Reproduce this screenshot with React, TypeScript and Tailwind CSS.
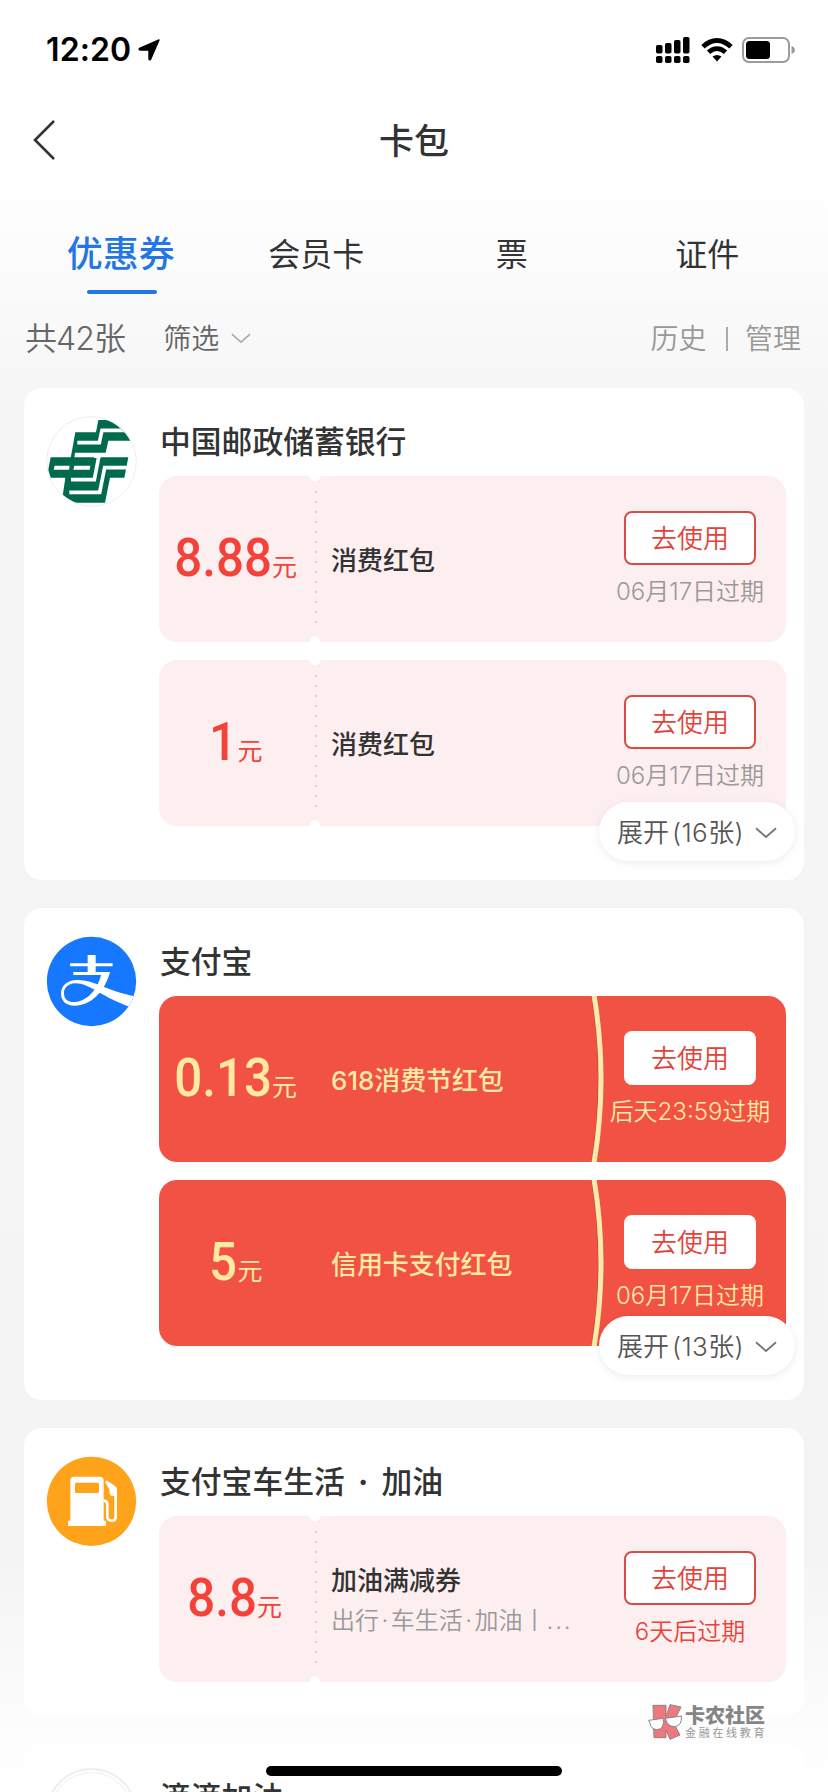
import { Fragment, useState } from "react";
import type { ReactNode } from "react";

type Coupon = {
    amount: string;
    name: string;
    desc?: string;
    expire: string;
    urgent?: boolean;
};

type Shop = {
    id: string;
    title: string;
    logo: ReactNode;
    theme: "pink" | "red";
    coupons: Coupon[];
    more?: number;
};

function PostBankLogo(){
    return (
        <svg viewBox="78 108 273 273" className="h-[91px] w-[91px]">
            <defs>
                <clipPath id="bank">
                    <circle cx="214.5" cy="244.5" r="132" />
                </clipPath>
            </defs>
            <circle cx="214.5" cy="244.5" r="134.5" fill="#fff" stroke="#e9e9e9" strokeWidth="2.5" />
            <g clipPath="url(#bank)">
                <path fill="#016a4c" d="M166 157H228L235 120H350V182H265L257 218H165L163 234H152Z" />
                <path fill="#016a4c" d="M92 232H325L313 293H270L255 368H125L136 293H80Z" />
                <path fill="none" stroke="#fff" strokeWidth="11" d="M172 188H238L246 151H345" />
                <path fill="none" stroke="#fff" strokeWidth="11" d="M153 299H223L237 226" />
                <path fill="none" stroke="#fff" strokeWidth="11" d="M148 337H239L254 263H335" />
                <path fill="#fff" d="M104 257H149L147 269H101ZM163 257H211L209 269H160Z" />
                <path fill="#fff" d="M223 226H244L242 234H222Z" />
            </g>
        </svg>
    );
}

function AlipayLogo(){
    return (
        <svg viewBox="78 108 273 273" className="h-[91px] w-[91px]">
            <defs>
                <clipPath id="alipay">
                    <circle cx="214.5" cy="244.5" r="134" />
                </clipPath>
            </defs>
            <circle cx="214.5" cy="244.5" r="134" fill="#1677ff" />
            <g clipPath="url(#alipay)" fill="#fff">
                <path d="M203 165H227V219H203Z" />
                <path d="M150 190H278V199H150Z" />
                <path d="M160 216H270C264 240 252 262 241 276C218 304 192 317 163 317C138 317 123 302 123 281C123 256 143 241 170 240C194 239 216 246 240 256C268 268 300 281 350 290V328C300 312 262 292 231 274C207 260 188 250 166 250C143 251 131 264 132 281C133 299 146 307 164 306C186 305 206 292 223 270C232 258 238 244 243 225H160Z" />
            </g>
        </svg>
    );
}

function GasLogo(){
    return (
        <svg viewBox="78 138 273 273" className="h-[91px] w-[91px]">
            <circle cx="214.5" cy="274" r="134" fill="#ffa31a" />
            <path fill="#fff" d="M151 212Q151 200 163 200H239Q251 200 251 212V332H258V348H144V332H151Z" />
            <rect x="165" y="218" width="72" height="31" rx="4" fill="#ffa31a" />
            <path fill="none" stroke="#fff" strokeWidth="8" strokeLinejoin="round" d="M250 271Q262 273 262 284V321Q263 332 275 332Q287 332 287 320V240Q287 234 281 230L257 214" />
            <path fill="#fff" d="M258 213L289 233V258H276Q268 255 269 246Q271 238 264 232Q257 224 258 213Z" />
        </svg>
    );
}

const shops: Shop[] = [
    {
        id: "bank",
        title: "中国邮政储蓄银行",
        logo: <PostBankLogo />,
        theme: "pink",
        more: 16,
        coupons: [
            { amount: "8.88", name: "消费红包", expire: "06月17日过期" },
            { amount: "1", name: "消费红包", expire: "06月17日过期" },
        ],
    },
    {
        id: "alipay",
        title: "支付宝",
        logo: <AlipayLogo />,
        theme: "red",
        more: 13,
        coupons: [
            { amount: "0.13", name: "618消费节红包", expire: "后天23:59过期" },
            { amount: "5", name: "信用卡支付红包", expire: "06月17日过期" },
        ],
    },
    {
        id: "gas",
        title: "支付宝车生活 · 加油",
        logo: <GasLogo />,
        theme: "pink",
        coupons: [
            { amount: "8.8", name: "加油满减券", desc: "出行·车生活·加油丨", expire: "6天后过期", urgent: true },
        ],
    },
];

const tabs = ["优惠券", "会员卡", "票", "证件"];

function StatusBar(){
    return (
        <div className="flex h-[100px] items-center justify-between pl-[46px] pr-[33px]">
            <div className="flex items-center gap-[7px]">
                <span className="font-['Inter'] text-[32px] font-semibold leading-none tracking-[0.1px] text-black">12:20</span>
                <svg viewBox="0 0 22 22" className="h-[22px] w-[22px]">
                    <path d="M21 1L12.5 20.5Q11.5 21.5 11 20V11H2Q.5 10.5 1.500 9.500Z" fill="#000" stroke="#000" strokeWidth="1.400" strokeLinejoin="round" />
                </svg>
            </div>
            <div className="flex items-center">
                <svg viewBox="0 0 34 26" className="h-[26px] w-[34px]">
                    <g fill="#000">
                        <rect x="0" y="8" width="6.500" height="8.500" rx="1.800" />
                        <rect x="9" y="6" width="6.500" height="10.500" rx="1.800" />
                        <rect x="18" y="3" width="6.500" height="13.500" rx="1.800" />
                        <rect x="27" y="0" width="6.500" height="16.500" rx="1.800" />
                        <rect x="0" y="19" width="6.500" height="7" rx="1.800" />
                        <rect x="9" y="19" width="6.500" height="7" rx="1.800" />
                        <rect x="18" y="19" width="6.500" height="7" rx="1.800" />
                        <rect x="27" y="19" width="6.500" height="7" rx="1.800" />
                    </g>
                </svg>
                <svg viewBox="0 0 32 24" className="ml-[11px] h-6 w-8">
                    <g fill="none" stroke="#000" strokeWidth="4.800">
                        <path d="M2 8.800Q8.500 2.500 16 2.500T30 8.800" />
                        <path d="M7.500 14.300Q11.500 10.600 16 10.600T24.500 14.300" />
                    </g>
                    <path d="M11.500 18.600Q16 15.200 20.500 18.600L16 23.500Z" />
                </svg>
                <svg viewBox="0 0 53 26" className="ml-[9px] h-[26px] w-[53px]">
                    <rect x="1" y="1" width="46" height="24" rx="6" fill="none" stroke="#9b9b9b" strokeWidth="2" />
                    <rect x="4" y="4" width="24" height="18" rx="3.500" fill="#000" />
                    <path d="M49.500 9Q53 10.500 53 13T49.500 17Z" fill="#9b9b9b" />
                </svg>
            </div>
        </div>
    );
}

function Chevron({ className }: { className: string }){
    return (
        <svg viewBox="0 0 22 12" className={className}>
            <path d="M1 1.200L11 10L21 1.200" fill="none" stroke="currentColor" strokeWidth="1.800" />
        </svg>
    );
}

// the middle dot is narrow in the latin font, so it gets its own margins
function Dotted({ text, dotClass }: { text: string; dotClass: string }){
    return (
        <>
            {text.split("·").map((part, index) => (
                <Fragment key={index}>
                    {index > 0 && <span className={dotClass}>·</span>}
                    {part}
                </Fragment>
            ))}
        </>
    );
}

function CouponItem({ coupon, theme }: { coupon: Coupon; theme: "pink" | "red" }){
    const red = theme === "red";

    return (
        <div className={`relative flex h-[166px] overflow-hidden rounded-[18px] ${red ? "bg-[#f15244] text-[#ffe9a3]" : "bg-[#fdeff0] text-[#f2423a]"}`}>
            {red ? (
                <svg viewBox="0 0 627 166" className="absolute inset-0 h-full w-full">
                    <path d="M432.500 -1Q446.500 83 432.500 167" fill="none" stroke="#b5533c" strokeWidth="1" />
                    <path d="M435 -1Q449 83 435 167" fill="none" stroke="#ffeaa8" strokeWidth="5" />
                </svg>
            ) : (
                <svg viewBox="0 0 627 166" className="absolute inset-0 h-full w-full">
                    <path d="M149 -1L152.500 4Q156 6.500 159.500 4L163 -1ZM149 167L152.500 162Q156 157.500 159.500 162L163 167Z" fill="#fff" />
                    <path d="M157 16V147" fill="none" stroke="#e9b8bb" strokeWidth="2" strokeLinecap="round" strokeDasharray="0.1 9.9" />
                </svg>
            )}
            <div className="relative flex w-[156px] items-baseline justify-center pr-[4px] pt-[55px]">
                <span className={`inline-block origin-right scale-x-[0.93] font-['Roboto'] text-[53px] font-medium leading-[54px] ${coupon.amount.length > 1 ? "-ml-[6px]" : ""}`}>{coupon.amount}</span>
                <span className="text-[25px] leading-none">元</span>
            </div>
            <div className="relative flex flex-1 flex-col justify-center pl-4 pt-[3px] leading-none">
                <p className={`text-[26px] font-medium leading-[38px] ${red ? "tracking-[-0.1px]" : "text-[#333]"}`}>{coupon.name}</p>
                {coupon.desc && (
                    <p className="whitespace-nowrap pt-[2px] text-[24px] font-[350] leading-[38px] text-[#999]">
                        <Dotted text={coupon.desc} dotClass="mx-[2.5px]" />
                        <span className="tracking-[1.8px]">...</span>
                    </p>
                )}
            </div>
            <div className="relative flex w-[192px] flex-col items-center pt-[35px]">
                <button className={`h-[54px] w-[132px] rounded-lg bg-white pt-[2px] text-[26px] font-[350] leading-none text-[#e0443a] ${red ? "" : "border-2 border-[#d94c42]"}`}>
                    去使用
                </button>
                <p className={`mt-2 whitespace-nowrap text-[24px] font-[350] leading-[37px] ${red ? "" : coupon.urgent ? "text-[#e5443a]" : "text-[#999]"}`}>{coupon.expire}</p>
            </div>
        </div>
    );
}

function ShopCard({ shop }: { shop: Shop }){
    return (
        <div className={`relative flex rounded-[18px] bg-white pl-[22px] pr-[18px] pt-7 ${shop.more ? "h-[492px]" : "h-[288px]"}`}>
            <div className="w-[113px] shrink-0">{shop.logo}</div>
            <div className="flex-1">
                <h2 className="h-[60px] pl-px text-[30.800px] font-medium leading-[51px] text-[#333]">
                    <Dotted text={shop.title} dotClass="mx-[5px] font-bold" />
                </h2>
                <div className="flex flex-col gap-[18px]">
                    {shop.coupons.map((item, index) => (
                        <CouponItem key={index} coupon={item} theme={shop.theme} />
                    ))}
                </div>
            </div>
            {shop.more && (
                <button className={`absolute right-[9px] flex h-[59px] w-[196px] items-center justify-center rounded-full bg-white pt-[2px] text-[26px] font-[350] text-[#555] shadow-[0_2px_8px_rgba(0,0,0,0.08)] ${shop.theme === "red" ? "bottom-[25px]" : "bottom-[19px]"}`}>
                    展开<span className="ml-[3px] mr-[4px] tracking-[0.4px]">({shop.more}张)</span>
                    <Chevron className="ml-[7px] h-3 w-[22px] text-[#777]" />
                </button>
            )}
        </div>
    );
}

function Watermark(){
    return (
        <div className="absolute left-[648px] top-[1704px] flex items-center">
            <svg viewBox="0 0 102 108" className="h-9 w-[34px]">
                <g fill="#ee7880" stroke="#8b8585" strokeWidth="3">
                    <path d="M15 4H54V38L66 2L99 9L76 56L96 93L66 106L54 78V101H18Z" />
                    <path fill="#fff" d="M2 49L46 43Q50 77 26 77Q8 75 6 58ZM52 43L100 36Q103 66 79 68Q58 68 52 43Z" />
                </g>
            </svg>
            <div className="ml-[3px] whitespace-nowrap pt-[2px]">
                <p className="text-[20px] font-black leading-[20px] text-[#858585]">卡农社区</p>
                <p className="mt-px text-[11px] leading-[13px] tracking-[2.700px] text-[#999]">金融在线教育</p>
            </div>
        </div>
    );
}

function App(){
    const [active, setActive] = useState(0);

    return (
        <div className="relative h-[1792px] w-[828px] overflow-hidden bg-[linear-gradient(180deg,#fff_0,#fefefe_200px,#f5f5f5_420px,#f4f4f4_1560px,#fcfcfc_1716px,#fff_1792px)] font-[Inter,'Noto_Sans_CJK_SC',sans-serif]">
            <StatusBar />
            <header className="grid h-20 grid-cols-3 items-center">
                <svg viewBox="0 0 22 40" className="ml-[33px] h-10 w-[22px]">
                    <path d="M21 1L2 20L21 39" fill="none" stroke="#333" strokeWidth="2.600" />
                </svg>
                <h1 className="pt-[2px] text-center text-[35px] font-medium leading-none text-[#333]">卡包</h1>
            </header>
            <nav className="mt-9 flex h-[78px] px-[23px]">
                {tabs.map((tab, index) => (
                    <button key={tab} onClick={() => setActive(index)} className={`flex flex-1 flex-col items-center ${active === index ? "text-[36px] font-medium text-[#2276e6]" : "text-[32px] text-[#333]"}`}>
                        <span className="h-[74px] leading-[77px]">{tab}</span>
                        {active === index && <i className="ml-[2px] h-1 w-[70px] rounded-full bg-[#2276e6]" />}
                    </button>
                ))}
            </nav>
            <div className="flex h-[94px] items-center pl-[25px] pr-[27px] pb-[5px] text-[28px] font-[350] text-[#666]">
                <span className="text-[32px] tracking-[-0.9px]">共42张</span>
                <span className="ml-[38px]">筛选</span>
                <Chevron className="ml-3 h-[11px] w-5 text-[#aaa]" />
                <span className="ml-auto text-[#999]">历史</span>
                <i className="ml-5 h-6 w-[1.500px] bg-[#aaa]" />
                <span className="ml-[17px] text-[#999]">管理</span>
            </div>
            <main className="flex flex-col gap-7 px-6">
                {shops.map((shop) => (
                    <ShopCard key={shop.id} shop={shop} />
                ))}
                <div className="flex h-[120px] rounded-[18px] bg-white pl-[22px] pt-6">
                    <div className="h-[91px] w-[91px] rounded-full border-2 border-[#eee] p-[2px]">
                        <div className="h-full w-full rounded-full border border-[#eee]" />
                    </div>
                    <h2 className="ml-[23px] text-[30.800px] font-medium leading-[59px] text-[#333]">滴滴加油</h2>
                </div>
            </main>
            <Watermark />
            <div className="absolute left-[266px] top-[1766px] h-[10px] w-[296px] rounded-full bg-black" />
        </div>
    );
}

export default App;
